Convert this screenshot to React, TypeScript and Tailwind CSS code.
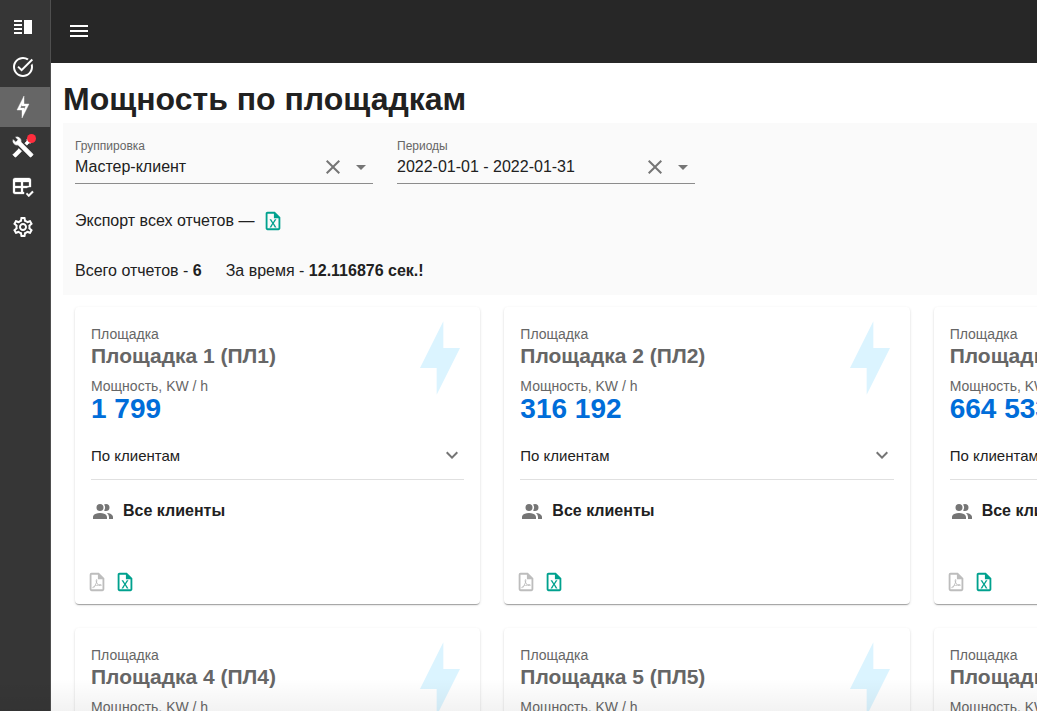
import React, { useState } from 'react';
import { MdArrowDropDown, MdClose, MdExpandMore, MdMenu, MdOutlineSettings, MdTaskAlt, MdVerticalSplit } from 'react-icons/md';

const paths = {
  boltOutline: 'M11 9.47V11H14.76L13 14.53V13H9.24L11 9.47M13 1L6 15H11V23L18 9H13V1Z',
  bolt: 'M11 15H6L13 1V9H18L11 23V15Z',
  tools:
    'M21.71 20.29L20.29 21.71A1 1 0 0 1 18.88 21.71L7 9.85A3.81 3.81 0 0 1 6 10A4 4 0 0 1 2.22 4.7L4.76 7.24L5.29 6.71L6.71 5.29L7.24 4.76L4.7 2.22A4 4 0 0 1 10 6A3.81 3.81 0 0 1 9.85 7L21.71 18.88A1 1 0 0 1 21.71 20.29M2.29 18.88A1 1 0 0 0 2.29 20.29L3.71 21.71A1 1 0 0 0 5.12 21.71L10.59 16.25L7.76 13.42M20 2L16 4V6L13.83 8.17L15.83 10.17L18 8H20L22 4Z',
  tableCheck:
    'M4 3H18C19.11 3 20 3.9 20 5V12.08C18.45 11.82 16.92 12.18 15.68 13H12V17H13.08C12.97 17.68 12.97 18.35 13.08 19H4C2.9 19 2 18.11 2 17V5C2 3.9 2.9 3 4 3M4 7V11H10V7H4M12 7V11H18V7H12M4 13V17H10V13H4M17.75 22L15 19L16.16 17.84L17.75 19.43L21.34 15.84L22.5 17.25L17.75 22',
  people:
    'M16 17V19H2V17S2 13 9 13 16 17 16 17M12.5 7.5A3.5 3.5 0 1 0 9 11A3.5 3.5 0 0 0 12.5 7.5M15.94 13A5.32 5.32 0 0 1 18 17V19H22V17S22 13.37 15.94 13M15 4A3.39 3.39 0 0 0 13.07 4.59A5 5 0 0 1 13.07 10.41A3.39 3.39 0 0 0 15 11A3.5 3.5 0 0 0 15 4Z',
  excel:
    'M14 2H6C4.89 2 4 2.9 4 4V20C4 21.11 4.89 22 6 22H18C19.11 22 20 21.11 20 20V8L14 2M18 20H6V4H13V9H18V20M12.9 14.5L15.8 19H14L12 15.6L10 19H8.2L11.1 14.5L8.2 10H10L12 13.4L14 10H15.8L12.9 14.5Z',
  pdf: 'M14,2L20,8V20A2,2 0 0,1 18,22H6A2,2 0 0,1 4,20V4A2,2 0 0,1 6,2H14M18,20V9H13V4H6V20H18M10.92,12.31C10.68,11.54 10.15,9.08 11.55,9.04C12.95,9 12.03,12.16 12.03,12.16C12.42,13.65 14.05,14.72 14.05,14.72C14.55,14.57 17.4,14.24 17,15.72C16.57,17.2 13.5,15.81 13.5,15.81C11.55,15.95 10.09,16.47 10.09,16.47C8.96,18.58 7.64,19.5 7.1,18.61C6.43,17.5 9.23,16.07 9.23,16.07C10.68,13.72 10.9,12.35 10.92,12.31M11.57,13.15C11.17,14.45 10.37,15.84 10.37,15.84C11.22,15.5 13.08,15.11 13.08,15.11C11.94,14.11 11.59,13.16 11.57,13.15M14.71,15.32C14.71,15.32 16.46,15.97 16.5,15.71C16.57,15.44 15.17,15.2 14.71,15.32M9.05,16.81C8.28,17.11 7.54,18.39 7.72,18.39C7.9,18.4 8.63,17.79 9.05,16.81M11.57,11.26C11.57,11.21 12,9.58 11.57,9.53C11.27,9.5 11.56,11.22 11.57,11.26Z',
};

const Icon: React.FC<{ name: keyof typeof paths; className?: string }> = ({ name, className = 'size-6' }) => (
  <svg viewBox="0 0 24 24" fill="currentColor" aria-hidden="true" className={className}>
    <path d={paths[name]} />
  </svg>
);

const navItems = [
  { id: 'board', label: 'Панель', icon: <MdVerticalSplit className="size-6" /> },
  { id: 'tasks', label: 'Задачи', icon: <MdTaskAlt className="size-6" /> },
  { id: 'power', label: 'Мощность', icon: <Icon name="boltOutline" className="size-6 stroke-current stroke-[0.4]" /> },
  { id: 'service', label: 'Обслуживание', icon: <Icon name="tools" className="size-6 stroke-current stroke-[0.7]" />, badge: true },
  { id: 'tables', label: 'Таблицы', icon: <Icon name="tableCheck" className="size-6 stroke-current stroke-[0.3]" /> },
  { id: 'settings', label: 'Настройки', icon: <MdOutlineSettings className="size-6" /> },
];

const sites = [
  { name: 'Площадка 1 (ПЛ1)', power: '1 799' },
  { name: 'Площадка 2 (ПЛ2)', power: '316 192' },
  { name: 'Площадка 3 (ПЛ3)', power: '664 533' },
  { name: 'Площадка 4 (ПЛ4)', power: '12 480' },
  { name: 'Площадка 5 (ПЛ5)', power: '87 215' },
  { name: 'Площадка 6 (ПЛ6)', power: '45 902' },
];

const Sidebar: React.FC = () => {
  const [active, setActive] = useState('power');

  return (
    <nav className="flex w-[51px] shrink-0 flex-col border-r border-[#4f4f4f] bg-[#363636] pt-[7px] text-white">
      {navItems.map((item) => (
        <button
          key={item.id}
          aria-label={item.label}
          onClick={() => setActive(item.id)}
          className={`flex h-10 items-center pl-[11px] ${active === item.id ? 'bg-[#666666]' : ''}`}
        >
          <span className="relative">
            {item.icon}
            {item.badge && <span className="absolute -top-px -right-px size-[9px] rounded-full bg-[#ff2d3d]" />}
          </span>
        </button>
      ))}
    </nav>
  );
};

const FilterField: React.FC<{ id: string; label: string; initial: string }> = ({ id, label, initial }) => {
  const [value, setValue] = useState(initial);

  return (
    <div className="w-[298px]">
      <label htmlFor={id} className="block text-[12px] leading-4 text-[#666666]">
        {label}
      </label>
      <div className="flex h-[30px] items-center border-b border-[#8c8c8c] pb-1 text-[#757575]">
        <input
          id={id}
          value={value}
          onChange={(e) => setValue(e.target.value)}
          className="min-w-0 flex-1 bg-transparent text-[16px] leading-6 text-[#212121] outline-none"
        />
        <button aria-label="Очистить" onClick={() => setValue('')} className="mr-1 grid size-6 place-items-center">
          <MdClose className="size-6" />
        </button>
        <button aria-label="Открыть список" className="grid size-6 place-items-center">
          <MdArrowDropDown className="size-6" />
        </button>
      </div>
    </div>
  );
};

const SiteCard: React.FC<{ name: string; power: string }> = ({ name, power }) => {
  return (
    <article className="relative rounded bg-white pb-2.5 shadow-[0_2px_1px_-1px_rgba(0,0,0,0.2),0_1px_1px_rgba(0,0,0,0.14),0_1px_3px_rgba(0,0,0,0.12)]">
      <Icon name="bolt" className="absolute top-[11px] right-0 size-20 text-[#dbf4ff]" />
      <div className="px-4 pt-4">
        <p className="text-[14px] leading-[22px] text-[#666666]">Площадка</p>
        <h2 className="text-[21px] leading-[22px] font-bold text-[#666666]">{name}</h2>
        <p className="mt-2 text-[14px] leading-[22px] text-[#666666]">Мощность, KW / h</p>
        <p className="text-[28px] leading-6 font-bold text-[#006dd9]">{power}</p>
        <button className="mt-3 flex h-[47px] w-full items-center justify-between border-b border-[#e0e0e0] text-[15px]">
          По клиентам
          <MdExpandMore className="mb-0.5 size-6 text-[#757575]" />
        </button>
        <div className="mt-5 flex h-6 items-start gap-2">
          <Icon name="people" className="size-6 text-[#757575]" />
          <span className="text-[16px] leading-[22px] font-bold">Все клиенты</span>
        </div>
      </div>
      <div className="mt-[46px] flex gap-1 px-2.5">
        <button aria-label="Скачать PDF" disabled className="grid size-6 place-items-center text-[#bdbdbd]">
          <Icon name="pdf" className="size-[22px]" />
        </button>
        <button aria-label="Скачать Excel" className="grid size-6 place-items-center text-[#00a18e]">
          <Icon name="excel" className="size-[22px]" />
        </button>
      </div>
    </article>
  );
};

const App: React.FC = () => {
  return (
    <div className="relative flex h-screen overflow-hidden bg-white font-['Liberation_Sans',Arial,sans-serif] text-[#212121]">
      <Sidebar />
      <div className="flex min-w-0 flex-1 flex-col overflow-hidden">
        <header className="flex h-[63px] shrink-0 items-center bg-[#272727] px-4 pb-0.5 text-white">
          <button aria-label="Меню">
            <MdMenu className="size-6" />
          </button>
        </header>

        <main className="min-w-[1300px] pt-3 pl-3">
          <h1 className="text-[32px] leading-[48px] font-bold">Мощность по площадкам</h1>

          <section className="bg-[#fafafa] px-3 pt-[15px] pb-3">
            <div className="flex gap-6">
              <FilterField id="grouping" label="Группировка" initial="Мастер-клиент" />
              <FilterField id="periods" label="Периоды" initial="2022-01-01 - 2022-01-31" />
            </div>
            <div className="mt-[25px] flex h-6 items-center gap-2">
              <span>Экспорт всех отчетов —</span>
              <button aria-label="Экспорт в Excel" className="text-[#00a18e]">
                <Icon name="excel" className="size-[22px]" />
              </button>
            </div>
            <div className="mt-[26px] flex h-6 items-center gap-6">
              <span>
                Всего отчетов - <b>6</b>
              </span>
              <span>
                За время - <b>12.116876 сек.!</b>
              </span>
            </div>
          </section>

          <section className="grid grid-cols-3 gap-6 p-3">
            {sites.map((site) => (
              <SiteCard key={site.name} {...site} />
            ))}
          </section>
        </main>
      </div>

      {/* Soft fade along the lower edge */}
      <div className="pointer-events-none absolute inset-x-0 bottom-0 h-8 bg-linear-to-b from-transparent to-black/5" />
    </div>
  );
};

export default App;
